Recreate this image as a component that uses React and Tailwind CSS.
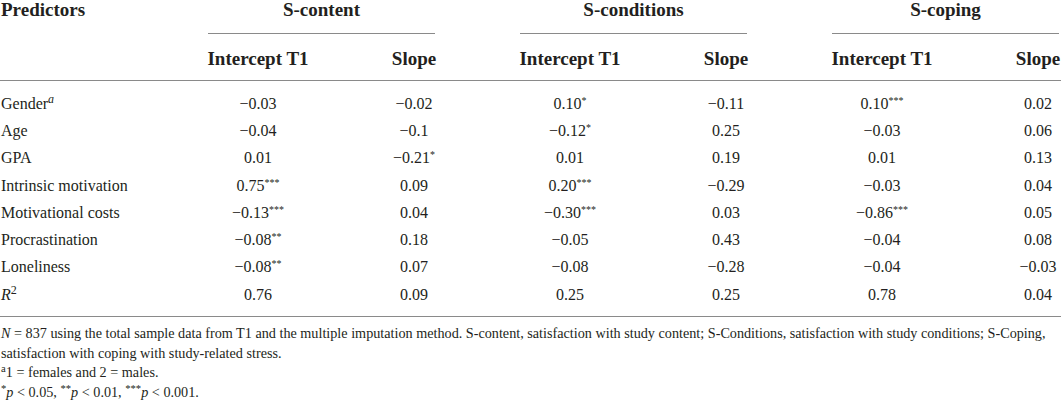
import React from 'react'

const rows = [
    { label: 'Gender', sup: 'a', vals: [['−0.03'], ['−0.02'], ['0.10', '*'], ['−0.11'], ['0.10', '***'], ['0.02']] },
    { label: 'Age', vals: [['−0.04'], ['−0.1'], ['−0.12', '*'], ['0.25'], ['−0.03'], ['0.06']] },
    { label: 'GPA', vals: [['0.01'], ['−0.21', '*'], ['0.01'], ['0.19'], ['0.01'], ['0.13']] },
    { label: 'Intrinsic motivation', vals: [['0.75', '***'], ['0.09'], ['0.20', '***'], ['−0.29'], ['−0.03'], ['0.04']] },
    { label: 'Motivational costs', vals: [['−0.13', '***'], ['0.04'], ['−0.30', '***'], ['0.03'], ['−0.86', '***'], ['0.05']] },
    { label: 'Procrastination', vals: [['−0.08', '**'], ['0.18'], ['−0.05'], ['0.43'], ['−0.04'], ['0.08']] },
    { label: 'Loneliness', vals: [['−0.08', '**'], ['0.07'], ['−0.08'], ['−0.28'], ['−0.04'], ['−0.03']] },
    { label: 'R2', vals: [['0.76'], ['0.09'], ['0.25'], ['0.25'], ['0.78'], ['0.04']] },
];

const groups = ['S-content', 'S-conditions', 'S-coping'];

const Label = ({ row }) => {
    if (row.label === 'R2') {
        return <span><i>R</i><sup>2</sup></span>
    }
    return (
        <span>
            {row.label}
            {row.sup && <sup><i>{row.sup}</i></sup>}
        </span>
    )
}

export default function App() {
    return (
        <div className="w-full overflow-hidden bg-white text-[#231f20]" style={{ fontFamily: '"Liberation Serif", "Times New Roman", serif' }}>
            {/* table */}
            <div className="w-[1116px]">
                {/* group header row */}
                <div className="flex text-[19px] leading-[19px] font-bold">
                    <div className="w-[180px] pl-px">Predictors</div>
                    {groups.map(g => (
                        <div key={g} className="w-[312px]">
                            <div className="ml-[28px] mr-[57px] border-b border-[#8a8a8a] pb-[14px] text-center">
                                {g}
                            </div>
                        </div>
                    ))}
                </div>
                {/* sub header row */}
                <div className="flex text-[19px] leading-[19px] font-bold pt-[15px] pb-[12px] border-b border-[#8a8a8a]">
                    <div className="w-[180px]"></div>
                    {groups.map(g => (
                        <React.Fragment key={g}>
                            <div className="w-[156px] text-center">Intercept T1</div>
                            <div className="w-[156px] text-center">Slope</div>
                        </React.Fragment>
                    ))}
                </div>
                {/* body */}
                <div className="pt-[9px] pb-[8px] border-b border-[#8a8a8a] text-[16px]">
                    {rows.map(row => (
                        <div key={row.label} className="flex h-[27.3px] items-center leading-[20px]">
                            <div className="w-[180px] pl-px">
                                <Label row={row} />
                            </div>
                            {row.vals.map(([v, s], i) => (
                                <div key={i} className="w-[156px] text-center">
                                    {v}
                                    {s && <sup className="text-[10px]">{s}</sup>}
                                </div>
                            ))}
                        </div>
                    ))}
                </div>
            </div>
            {/* notes */}
            <div className="pt-[7px] text-[14.2px] leading-[19.5px] pl-px">
                <p className="whitespace-nowrap">
                    <i>N</i> = 837 using the total sample data from T1 and the multiple imputation method. S-content, satisfaction with study content; S-Conditions, satisfaction with study conditions; S-Coping,
                </p>
                <p>satisfaction with coping with study-related stress.</p>
                <p><sup>a</sup>1 = females and 2 = males.</p>
                <p>
                    <sup>*</sup><i>p</i> &lt; 0.05, <sup>**</sup><i>p</i> &lt; 0.01, <sup>***</sup><i>p</i> &lt; 0.001.
                </p>
            </div>
        </div>
    )
}
